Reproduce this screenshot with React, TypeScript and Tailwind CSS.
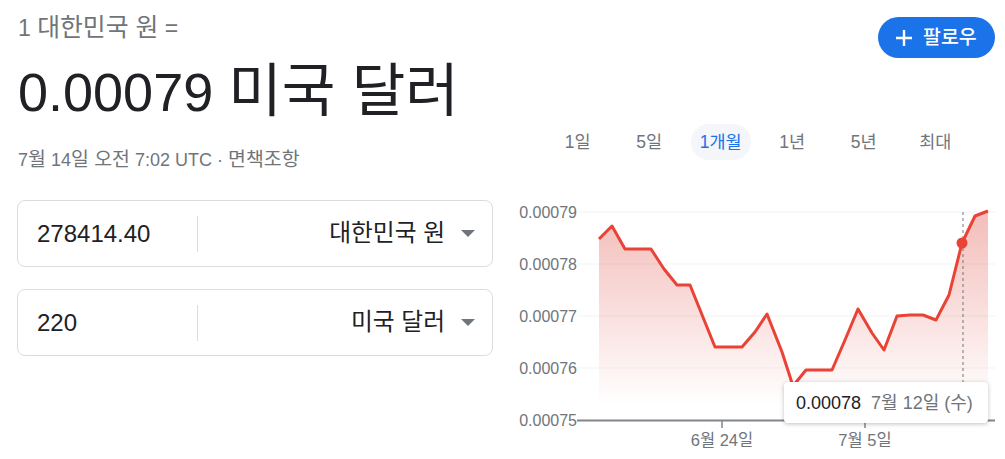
import * as React from 'react';

const points: [number, number][] = [
  [599, 239], [612, 226], [625, 249], [651, 249], [664, 269], [677, 285], [690, 285],
  [715, 347], [742, 347], [755, 332], [767, 314], [782, 352], [793, 386], [806, 370],
  [832, 370], [845, 340], [858, 309], [872, 333], [884, 350], [897, 316], [910, 315],
  [923, 315], [936, 320], [949, 295], [962, 243], [975, 216], [988, 211],
];

const tabs = ['1일', '5일', '1개월', '1년', '5년', '최대'];
const yLabels = [
  { y: 212, label: '0.00079' },
  { y: 264, label: '0.00078' },
  { y: 316, label: '0.00077' },
  { y: 368, label: '0.00076' },
  { y: 420, label: '0.00075' },
];

// hangul in the fallback font runs a little small next to the latin glyphs
function Ko({ children }: { children: React.ReactNode }) {
  return <span className="text-[1.08em]">{children}</span>;
}

function CurrencyBox({ value, currency }: { value: string; currency: string }) {
  return (
    <div className="flex h-[67px] w-[476px] items-center rounded-lg border border-[#dadce0]">
      <div className="w-[179px] pl-[19px] text-[24px] leading-[30px] text-[#202124]">{value}</div>
      <div className="h-[36px] w-px bg-[#dadce0]" />
      <div className="flex flex-1 items-center justify-end gap-[16px] pr-[17px]">
        <span className="text-[22px] leading-[30px] text-[#202124]">
          <Ko>{currency}</Ko>
        </span>
        <span className="h-0 w-0 border-x-[7px] border-t-[7px] border-x-transparent border-t-[#70757a]" />
      </div>
    </div>
  );
}

function Chart() {
  const line = points.map(([x, y]) => `${x},${y}`).join(' ');
  const area = `${line} 988,420 599,420`;
  return (
    <div className="relative ml-[7px] mt-[35px] h-[264px] w-[505px]">
      <svg width={505} height={264} viewBox="500 195 505 264" className="block">
        <defs>
          <linearGradient id="fill" gradientUnits="userSpaceOnUse" x1="0" y1="211" x2="0" y2="405">
            <stop offset="0" stopColor="#d93025" stopOpacity="0.32" />
            <stop offset="1" stopColor="#d93025" stopOpacity="0" />
          </linearGradient>
        </defs>
        {yLabels.slice(0, 4).map((l) => (
          <line key={l.y} x1={577} x2={995} y1={l.y} y2={l.y} stroke="#f1f3f4" strokeWidth={1} />
        ))}
        <polygon points={area} fill="url(#fill)" />
        <line x1={963} x2={963} y1={212} y2={420} stroke="#70757a" strokeWidth={1} strokeDasharray="3 3" />
        <polyline points={line} fill="none" stroke="#ea4335" strokeWidth={3} strokeLinejoin="round" />
        <circle cx={962} cy={243} r={5.5} fill="#ea4335" />
        <line x1={577} x2={995} y1={420.5} y2={420.5} stroke="#80868b" strokeWidth={2} />
        <line x1={722} x2={722} y1={420} y2={428} stroke="#80868b" strokeWidth={1.5} />
        <line x1={865} x2={865} y1={420} y2={428} stroke="#80868b" strokeWidth={1.5} />
        {yLabels.map((l) => (
          <text key={l.label} x={577} y={l.y} textAnchor="end" dominantBaseline="central" fontSize={16} fill="#70757a">
            {l.label}
          </text>
        ))}
        <text x={722} y={440} textAnchor="middle" dominantBaseline="central" fontSize={16.5} fill="#70757a">
          6월 24일
        </text>
        <text x={865} y={440} textAnchor="middle" dominantBaseline="central" fontSize={16.5} fill="#70757a">
          7월 5일
        </text>
      </svg>
      {/* tooltip */}
      <div className="absolute left-[284px] top-[187px] flex h-[41px] w-[204px] items-center gap-[10px] rounded-[4px] bg-white pl-[12px] text-[18px] leading-[22px] shadow-[0_1px_4px_rgba(0,0,0,0.25)]">
        <span className="text-[#202124]">0.00078</span>
        <span className="text-[#70757a]">7월 12일 (수)</span>
      </div>
    </div>
  );
}

export default function App() {
  return (
    <div className="flex h-[459px] w-[1005px] overflow-hidden bg-white font-['Liberation_Sans','Noto_Sans_CJK_KR',sans-serif]">
      <div className="w-[493px] shrink-0 pl-[17px]">
        <p className="ml-px mt-[14px] h-[28px] text-[23px] leading-[28px] text-[#70757a]">
          1 <Ko>대한민국 원</Ko> =
        </p>
        <p className="ml-px mt-[17px] h-[64px] whitespace-nowrap text-[54px] leading-[64px] text-[#202124]">
          0.00079 <Ko>미국 달러</Ko>
        </p>
        <p className="ml-px mt-[24px] h-[24px] text-[18px] leading-[24px] text-[#70757a]">
          7<Ko>월</Ko> 14<Ko>일 오전</Ko> 7:02 UTC · <Ko>면책조항</Ko>
        </p>
        <div className="mt-[29px] flex flex-col gap-[22px]">
          <CurrencyBox value="278414.40" currency="대한민국 원" />
          <CurrencyBox value="220" currency="미국 달러" />
        </div>
      </div>
      <div className="flex-1">
        <div className="flex justify-end pr-[10px] pt-[17px]">
          <button className="flex h-[41px] w-[117px] items-center gap-[10px] rounded-full bg-[#1a73e8] pl-[17px] text-[18px] font-medium text-white">
            <svg width="18" height="18" viewBox="0 0 18 18">
              <path d="M9 1v16M1 9h16" stroke="white" strokeWidth="2.4" />
            </svg>
            <Ko>팔로우</Ko>
          </button>
        </div>
        <div className="ml-[49px] mt-[66px] grid w-[429px] grid-cols-6">
          {tabs.map((t) => (
            <div key={t} className="flex justify-center">
              <span
                className={
                  t === '1개월'
                    ? 'flex h-[36px] items-center rounded-full bg-[#f4f6fa] px-[9px] text-[17.5px] text-[#1a73e8]'
                    : 'flex h-[36px] items-center px-[9px] text-[17.5px] text-[#70757a]'
                }
              >
                {t}
              </span>
            </div>
          ))}
        </div>
        <Chart />
      </div>
    </div>
  );
}
